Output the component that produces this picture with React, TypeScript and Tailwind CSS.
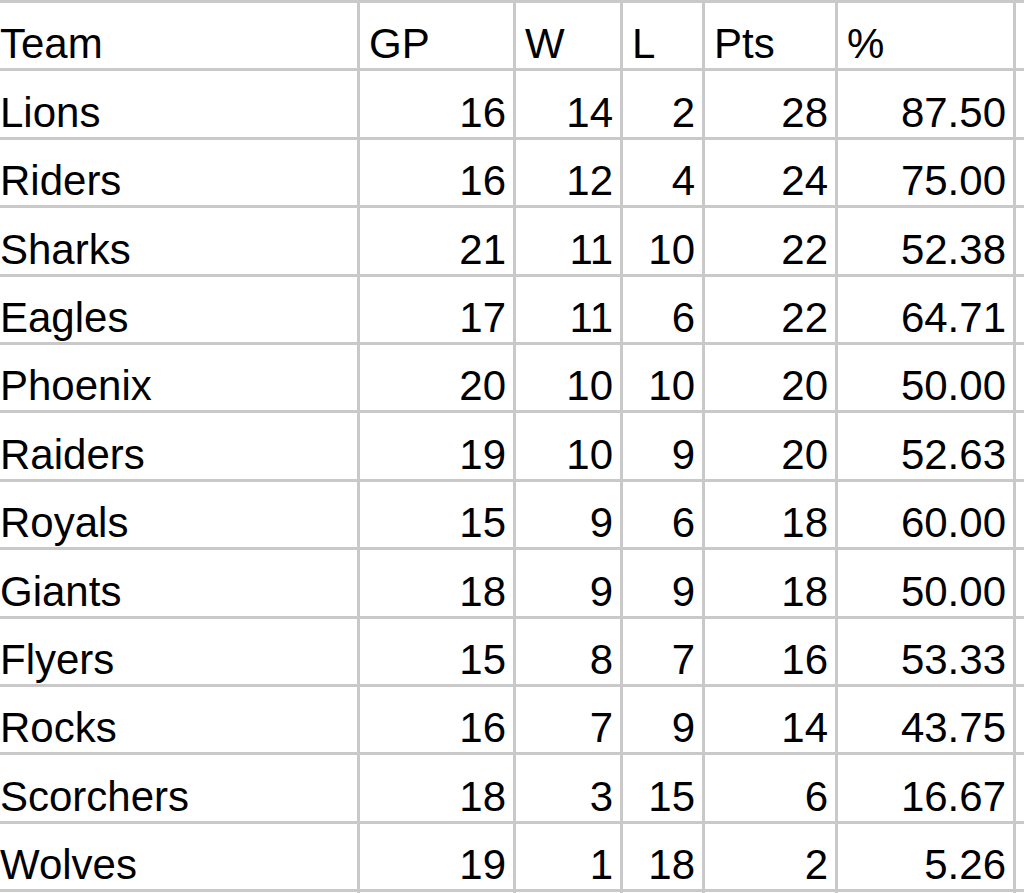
const rows: [string, number, number, number, number, string][] = [
  ["Lions", 16, 14, 2, 28, "87.50"],
  ["Riders", 16, 12, 4, 24, "75.00"],
  ["Sharks", 21, 11, 10, 22, "52.38"],
  ["Eagles", 17, 11, 6, 22, "64.71"],
  ["Phoenix", 20, 10, 10, 20, "50.00"],
  ["Raiders", 19, 10, 9, 20, "52.63"],
  ["Royals", 15, 9, 6, 18, "60.00"],
  ["Giants", 18, 9, 9, 18, "50.00"],
  ["Flyers", 15, 8, 7, 16, "53.33"],
  ["Rocks", 16, 7, 9, 14, "43.75"],
  ["Scorchers", 18, 3, 15, 6, "16.67"],
  ["Wolves", 19, 1, 18, 2, "5.26"],
];

const headers = ["Team", "GP", "W", "L", "Pts", "%"];

function Cell({ children, right, first }: { children?: React.ReactNode; right?: boolean; first?: boolean }) {
  return (
    <div
      className={`flex h-[65.4px] items-end overflow-hidden whitespace-nowrap bg-white pb-[3px] text-[42px] leading-none text-black ${
        right ? "justify-end pr-[7px]" : first ? "pl-[3px]" : "pl-[9px]"
      }`}
    >
      {children}
    </div>
  );
}

export default function App() {
  return (
    <div className="h-screen w-full overflow-hidden bg-white" style={{ fontFamily: '"Liberation Sans", Arial, sans-serif' }}>
      <div className="-ml-[3px] grid w-[calc(100%+3px)] grid-cols-[360px_153px_104px_79px_130px_175px_1fr] gap-[3px] bg-[#c9c9c9] pt-[3px]">
        {headers.map((h, i) => (
          <Cell key={h} first={i === 0}>
            {h}
          </Cell>
        ))}
        <Cell />
        {rows.map((r) => (
          <div key={r[0]} className="contents">
            <Cell first>{r[0]}</Cell>
            <Cell right>{r[1]}</Cell>
            <Cell right>{r[2]}</Cell>
            <Cell right>{r[3]}</Cell>
            <Cell right>{r[4]}</Cell>
            <Cell right>{r[5]}</Cell>
            <Cell />
          </div>
        ))}
        {Array.from({ length: 7 }).map((_, i) => (
          <Cell key={"e" + i} />
        ))}
      </div>
    </div>
  );
}
